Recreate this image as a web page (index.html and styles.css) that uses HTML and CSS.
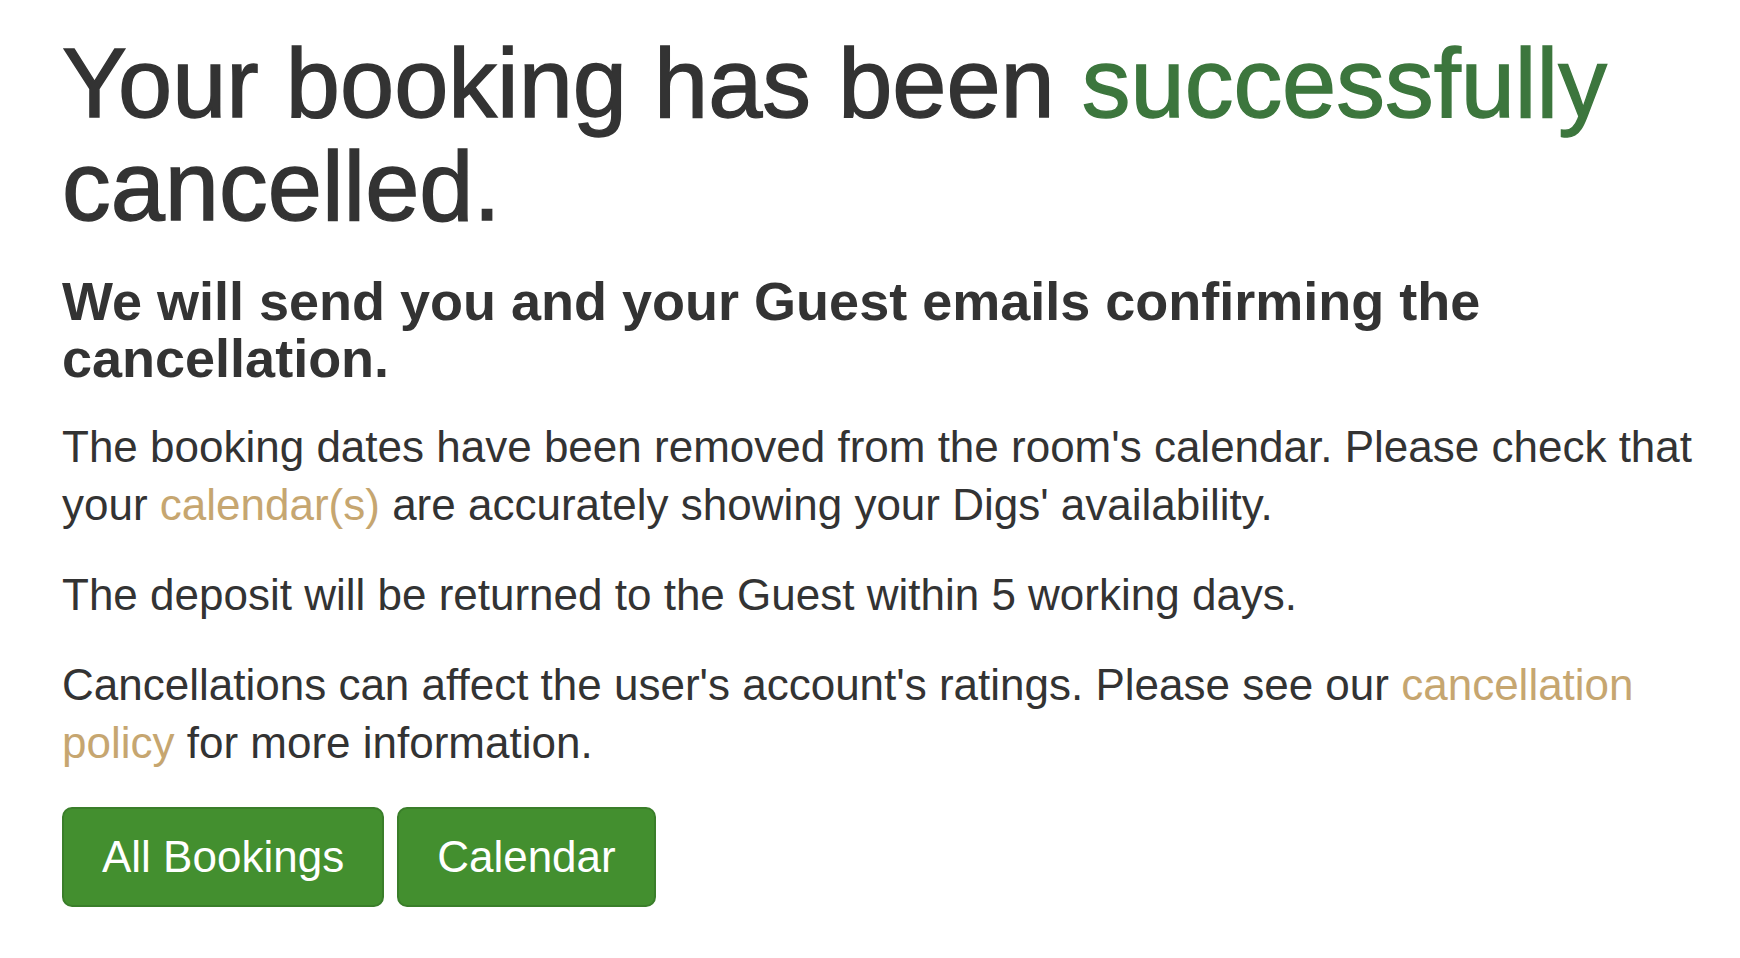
FILE: index.html
```html
<!DOCTYPE html>
<html lang="en">
<head>
<meta charset="utf-8">
<title>Booking cancelled</title>
<link rel="stylesheet" href="styles.css">
</head>
<body>
<main class="page">
  <h1 class="title">Your booking has been <span class="success">successfully</span> cancelled.</h1>
  <h3 class="subtitle">We will send you and your Guest emails confirming the cancellation.</h3>
  <p class="text">The booking dates have been removed from the room's calendar. Please check that your <a class="link" href="#">calendar(s)</a> are accurately showing your Digs' availability.</p>
  <p class="text">The deposit will be returned to the Guest within 5 working days.</p>
  <p class="text">Cancellations can affect the user's account's ratings. Please see our <a class="link" href="#">cancellation policy</a> for more information.</p>
  <div class="actions">
    <a class="btn" href="#">All Bookings</a>
    <a class="btn" href="#">Calendar</a>
  </div>
</main>
</body>
</html>
```

FILE: styles.css
```css
html, body {
  margin: 0;
  padding: 0;
  background: #ffffff;
}

body {
  font-family: "Liberation Sans", Arial, Helvetica, sans-serif;
  color: #333333;
}

.page {
  width: 1640px;
  padding: 32px 0 0 62px;
  box-sizing: content-box;
}

.title {
  margin: 0;
  font-size: 97.4px;
  line-height: 103px;
  font-weight: 400;
  color: #333333;
  -webkit-text-stroke: 1.4px currentColor;
}

.success {
  color: #3c763d;
}

.subtitle {
  margin: 35px 0 0 0;
  font-size: 54px;
  line-height: 57px;
  font-weight: 700;
  color: #333333;
}

.text {
  margin: 31px 0 0 0;
  font-size: 44px;
  line-height: 58px;
}

.text + .text {
  margin-top: 32px;
}

.link {
  color: #c6a670;
  text-decoration: none;
}

.actions {
  display: flex;
  gap: 13px;
  margin-top: 35px;
}

.btn {
  display: inline-flex;
  align-items: center;
  box-sizing: border-box;
  height: 100px;
  padding: 19px 38px;
  border: 2px solid #3a7e2a;
  border-radius: 10px;
  background: #438f2f;
  color: #ffffff;
  font-size: 44px;
  line-height: 58px;
  text-decoration: none;
}
```
